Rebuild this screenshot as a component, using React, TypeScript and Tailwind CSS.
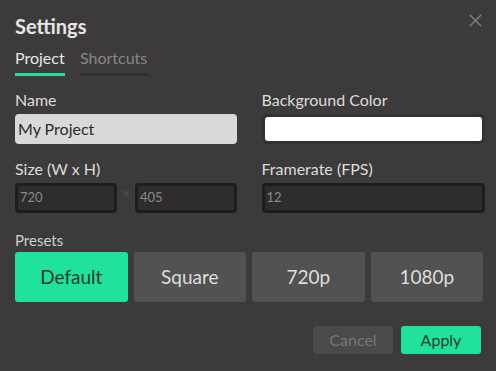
import { X } from "lucide-react";

const presets = ["Default", "Square", "720p", "1080p"];

const App = () => {
  return (
    <div
      className="w-[496px] h-[371px] bg-[#3c3a3b] text-[#dcdcdc] relative overflow-hidden"
      style={{ fontFamily: "Lato, 'Open Sans', sans-serif" }}
    >
      <div className="pl-[15px] pr-[12px] pt-[13px]">
        <h1 className="text-[20px] font-bold leading-[26px] text-[#e6e6e6]">Settings</h1>

        <div className="flex gap-[15px] mt-[9px]">
          <div className="text-[16px] leading-[20px] text-[#e8e8e8] pb-[5px] border-b-[3px] border-[#20e29c] w-[50px]">
            Project
          </div>
          <div className="text-[16px] leading-[20px] text-[#888] pb-[5px] border-b-[3px] border-[#323031] w-[69px]">
            Shortcuts
          </div>
        </div>

        <div className="grid grid-cols-2 gap-x-[24px] mt-[14px]">
          <div>
            <div className="text-[16px] leading-[20px]">Name</div>
            <div className="mt-[4px] h-[30px] w-[222px] rounded-[4px] bg-[#d9d9d9] text-[#2b2b2b] text-[16px] flex items-center px-[3px]">
              My Project
            </div>
          </div>
          <div>
            <div className="text-[16px] leading-[20px]">Background Color</div>
            <div className="mt-[4px] h-[30px] w-[223px] rounded-[5px] bg-[#333132] p-[3px]">
              <div className="h-full rounded-[3px] bg-white" />
            </div>
          </div>

          <div className="mt-[15px]">
            <div className="text-[16px] leading-[20px]">Size (W x H)</div>
            <div className="mt-[4px] flex items-center w-[222px]">
              <div className="h-[30px] w-[102px] rounded-[4px] bg-[#2e2c2d] border-[3px] border-[#1e1d1d] text-[#8a8a8a] text-[13px] flex items-center px-[2px]">
                720
              </div>
              <div className="w-[18px] text-center text-[#555] text-[13px] -mt-[8px]">×</div>
              <div className="h-[30px] w-[102px] rounded-[4px] bg-[#2e2c2d] border-[3px] border-[#1e1d1d] text-[#8a8a8a] text-[13px] flex items-center px-[2px]">
                405
              </div>
            </div>
          </div>
          <div className="mt-[15px]">
            <div className="text-[16px] leading-[20px]">Framerate (FPS)</div>
            <div className="mt-[4px] h-[30px] w-[223px] rounded-[4px] bg-[#2e2c2d] border-[3px] border-[#1e1d1d] text-[#8a8a8a] text-[13px] flex items-center px-[2px]">
              12
            </div>
          </div>
        </div>

        <div className="mt-[17px] text-[15px] leading-[20px] text-[#cfcfcf]">Presets</div>
        <div className="mt-[2px] grid grid-cols-4 gap-[6px] w-[468px]">
          {presets.map((p, i) => (
            <div
              key={p}
              className={
                i === 0
                  ? "h-[50px] rounded-[3px] bg-[#20e29c] text-[#2a3a33] text-[19px] flex items-center justify-center"
                  : "h-[50px] rounded-[3px] bg-[#525252] text-[#dedede] text-[19px] flex items-center justify-center"
              }
            >
              {p}
            </div>
          ))}
        </div>

        <div className="mt-[24px] flex justify-end gap-[8px] pr-[3px]">
          <div className="w-[80px] h-[28px] rounded-[3px] bg-[#4a4a4a] text-[#777] text-[16px] flex items-center justify-center">
            Cancel
          </div>
          <div className="w-[80px] h-[28px] rounded-[3px] bg-[#20e29c] text-[#2a3a33] text-[16px] flex items-center justify-center">
            Apply
          </div>
        </div>
      </div>

      <button className="absolute top-[10px] right-[10px] text-[#7a7a7a]">
        <X size={21} strokeWidth={2} />
      </button>
    </div>
  );
};

export default App;
